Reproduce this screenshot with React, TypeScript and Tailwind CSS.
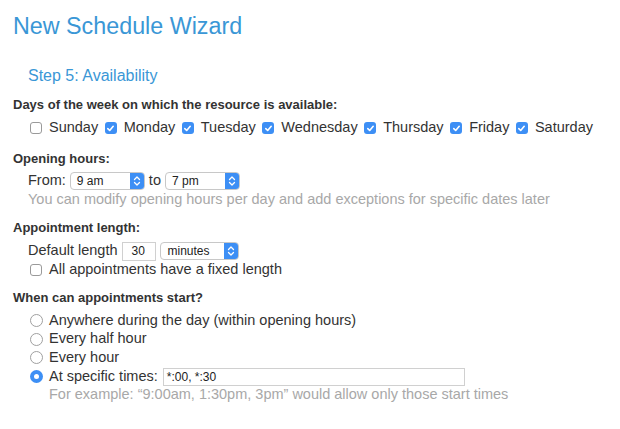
import React from "react";

const F = { fontFamily: '"Liberation Sans", Arial, sans-serif' };

function Check({ checked }: { checked: boolean }) {
  if (checked) {
    return (
      <span className="inline-flex h-[12px] w-[12px] items-center justify-center rounded-[3px] bg-[#3d8ff5] shrink-0">
        <svg width="9" height="9" viewBox="0 0 9 9">
          <path d="M1.8 4.6 L3.7 6.5 L7.2 2.3" fill="none" stroke="#fff" strokeWidth="1.6" strokeLinecap="round" strokeLinejoin="round" />
        </svg>
      </span>
    );
  }
  return <span className="inline-block h-[12px] w-[12px] rounded-[3px] border border-[#9a9a9a] bg-white shrink-0" />;
}

function Radio({ checked }: { checked: boolean }) {
  if (checked) {
    return (
      <span className="inline-flex h-[13px] w-[13px] items-center justify-center rounded-full bg-[#3d8ff5] shrink-0">
        <span className="h-[5px] w-[5px] rounded-full bg-white" />
      </span>
    );
  }
  return <span className="inline-block h-[13px] w-[13px] rounded-full border border-[#a0a0a0] bg-white shrink-0" />;
}

function Select({ value, w }: { value: string; w: string }) {
  return (
    <span className={`inline-flex h-[18px] items-stretch rounded-[4px] border border-[#c8c8c8] bg-white overflow-hidden ${w}`}>
      <span className="flex-1 pl-[6px] text-[12px] leading-[16px] text-[#222]">{value}</span>
      <span className="flex w-[14px] items-center justify-center bg-[#3d8ff5]">
        <svg width="8" height="12" viewBox="0 0 8 12">
          <path d="M1.5 4.5 L4 2 L6.5 4.5 M1.5 7.5 L4 10 L6.5 7.5" fill="none" stroke="#fff" strokeWidth="1.3" strokeLinecap="round" strokeLinejoin="round" />
        </svg>
      </span>
    </span>
  );
}

const days: [string, boolean][] = [
  ["Sunday", false],
  ["Monday", true],
  ["Tuesday", true],
  ["Wednesday", true],
  ["Thursday", true],
  ["Friday", true],
  ["Saturday", true],
];

export default function App() {
  return (
    <div className="w-[620px] h-[429px] bg-white text-[#333] pl-[13px] pt-[12px]" style={F}>
      <h1 className="text-[23.3px] leading-[28px] text-[#3a97d6]">New Schedule Wizard</h1>
      <h2 className="mt-[26px] ml-[15px] text-[16px] leading-[20px] text-[#3a97d6]">Step 5: Availability</h2>

      <div className="mt-[10px] text-[13px] leading-[18px] font-bold text-[#333]">
        Days of the week on which the resource is available:
      </div>
      <div className="mt-[4px] ml-[17px] flex h-[20px] items-center text-[14.5px] gap-[6.5px]">
        {days.map(([d, c]) => (
          <label key={d} className="flex items-center gap-[7px]">
            <Check checked={c} />
            <span>{d}</span>
          </label>
        ))}
      </div>

      <div className="mt-[12px] text-[13px] leading-[18px] font-bold">Opening hours:</div>
      <div className="mt-[3px] ml-[15px] flex h-[20px] items-center text-[14.5px]">
        <span>From:</span>
        <span className="ml-[4px]"><Select value="9 am" w="w-[75px]" /></span>
        <span className="ml-[4px]">to</span>
        <span className="ml-[4px]"><Select value="7 pm" w="w-[75px]" /></span>
      </div>
      <div className="ml-[15px] text-[14.5px] leading-[16px] text-[#a8a8a8]">
        You can modify opening hours per day and add exceptions for specific dates later
      </div>

      <div className="mt-[12px] text-[13px] leading-[18px] font-bold">Appointment length:</div>
      <div className="mt-[4px] ml-[15px] flex h-[20px] items-center text-[14.5px]">
        <span>Default length</span>
        <span className="ml-[5px] inline-flex h-[19px] w-[34px] items-center border border-[#d0d0d0] bg-white pl-[8px] text-[12px] text-[#222]">30</span>
        <span className="ml-[4px]"><Select value="minutes" w="w-[79px]" /></span>
      </div>
      <label className="ml-[17px] flex h-[18px] items-center gap-[7px] text-[14.5px]">
        <Check checked={false} />
        <span>All appointments have a fixed length</span>
      </label>

      <div className="mt-[10px] text-[13px] leading-[18px] font-bold">When can appointments start?</div>
      <div className="mt-[4px] ml-[17px] flex flex-col text-[14.5px]">
        <label className="flex h-[19px] items-center gap-[6px]"><Radio checked={false} /><span>Anywhere during the day (within opening hours)</span></label>
        <label className="flex h-[18px] items-center gap-[6px]"><Radio checked={false} /><span>Every half hour</span></label>
        <label className="flex h-[19px] items-center gap-[6px]"><Radio checked={false} /><span>Every hour</span></label>
        <label className="flex h-[19px] items-center gap-[6px]">
          <Radio checked={true} />
          <span>At specific times:</span>
          <span className="ml-[-1px] inline-flex h-[18px] w-[302px] items-center border border-[#d0d0d0] bg-white pl-[3px] text-[12px] text-[#222]">*:00, *:30</span>
        </label>
      </div>
      <div className="ml-[36px] text-[14.5px] leading-[17px] text-[#a8a8a8]">
        For example: “9:00am, 1:30pm, 3pm” would allow only those start times
      </div>
    </div>
  );
}
